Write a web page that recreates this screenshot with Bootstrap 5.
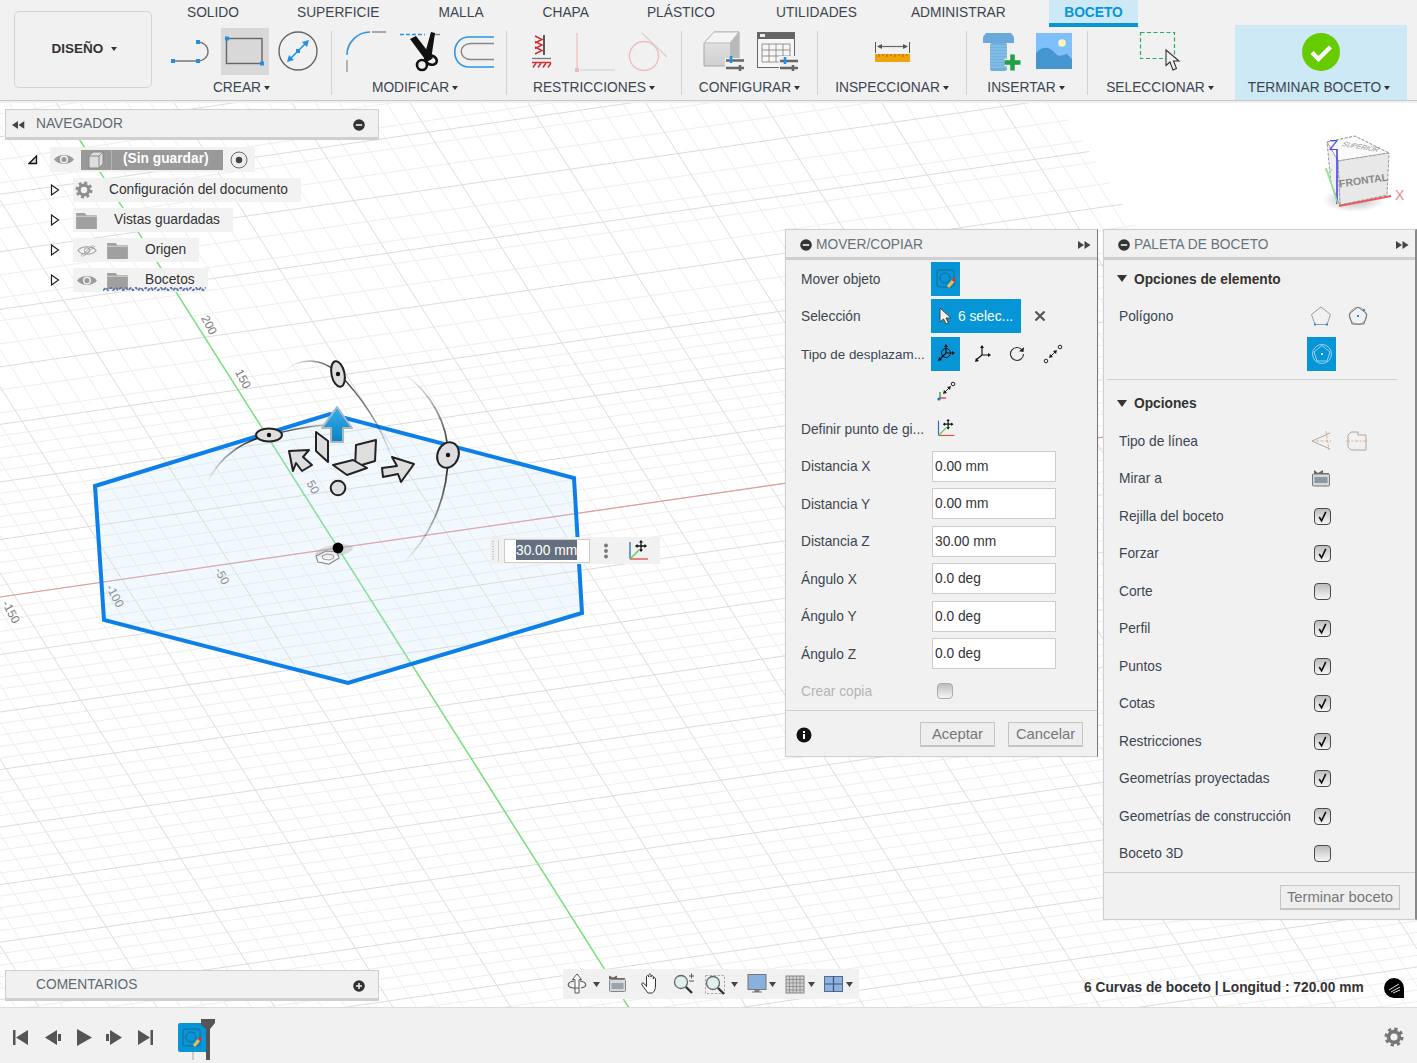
<!DOCTYPE html>
<html lang="es">
<head>
<meta charset="utf-8">
<title>Boceto</title>
<link rel="stylesheet" href="https://cdn.jsdelivr.net/npm/bootstrap@5.3.0/dist/css/bootstrap.min.css">
<style>
html,body{height:100%}
body{font-family:"Liberation Sans",Arial,sans-serif;font-size:13.75px;color:#3c4650;background:#fff;width:1417px;height:1063px}
svg{display:block}
.ribbon{height:103px;background:#f1f1f1;flex:none}
.ribbon-in{height:100px;border-bottom:1px solid #c8c8c8;box-sizing:content-box}
.mode-wrap{width:152px;padding:11px 0 0 14px;flex:none}
.mode-box{width:138px;height:77px;background:#f1f1f1;border:1px solid #d5d5d5;border-radius:5px;font-weight:700;color:#333;font-size:13.5px;padding:0 0 1px 3px}
.mode-box.dropdown-toggle::after{margin-left:8px;color:#333;border-top-width:4px;border-left-width:3.5px;border-right-width:3.5px}
.tabs{height:25px;padding-left:6px;flex-wrap:nowrap}
.tabs .nav-link{padding:5px 29px 0;color:#3c4650;font-size:13.75px;line-height:16px;height:27px}
.tabs .nav-link.active{width:89px;padding:5px 0 0;text-align:center;background:#cce9f5;color:#0696d7;font-weight:700;border-bottom:4px solid #0696d7;border-radius:0;box-sizing:border-box}
.tabs .tab-m{margin-left:1px}
.tabs .tab-u{margin-left:3px}
.tabs .tab-a{margin-left:-4px}
.tabs .tab-b{margin-left:auto;margin-right:279px}
.grp{height:75px;flex:none;padding-top:2px}
.grp svg{height:48px}
.grp .lab{height:25px;line-height:25px;font-size:13.75px;color:#3c4650;white-space:nowrap}
.lab.dropdown-toggle::after{margin-left:3px;vertical-align:2px;border-top-width:4px;border-left-width:3.5px;border-right-width:3.5px;color:#333}
.sep{width:1px;background:#d2d2d2;height:64px;margin-top:6px;flex:none}
.g1{width:179px}.g2{width:174px;padding-right:8px}.g3{width:174px}.g4{width:135px}.g5{width:148px}.g6{width:120px}.g7{width:147px}.g8{width:172px;background:#cce9f5}
.g6 .lab{margin-right:2px}.g7 .lab{margin-right:3px}.g8 .lab{margin-right:4px}
.viewport{flex:1 1 auto;min-height:0;background:#fff;overflow:hidden}
.scene{left:0;top:0}
.bar{background:#f1f1f1;border:1px solid #cfcfcf;border-bottom-width:3px;color:#5f6a72;font-size:13.75px;padding:2px 13px 0 5px;left:5px;width:374px;height:31px}
.bar-nav{top:6px}
.bar-com{top:867px;padding-left:30px}
.tree{left:28px;top:44px}
.tr{height:30px}
.root-tr{height:25px;margin-bottom:3px}
.tw{width:10px;flex:none;margin-right:13px;margin-left:22px}
.tb{background:rgba(241,241,241,.92);height:24px;color:#333;padding-right:13px}
.rootrow{height:25px;padding:0}
.rootlab{background:#999;height:20px;color:#fff;font-weight:700;width:142px;flex:none}
.rootlab .cb{width:31px;height:20px;border-right:1px solid #b4b4b4;flex:none}
.wavy{position:relative}
.wave{position:absolute;left:30px;bottom:1px}
.win{background:#f1f1f1;border:1px solid #cfcfcf;box-shadow:0 0 1px rgba(0,0,0,.15)}
.w-move{left:785px;top:126px;width:313px;height:528px;border-right-color:#777}
.w-pal{left:1103px;top:126px;width:314px;height:691px;border-right:2px solid #888}
.wh{height:30px;background:#f1f1f1;border-bottom:3px solid #cfcfcf;color:#68737b;padding:3px 6px 0 14px;flex:none}
.row-p{height:37.5px;padding-left:15px;color:#3c4650;white-space:nowrap;flex:none}
.lb{width:130px;flex:none;padding-top:3px}
.lb.clip{font-size:13.4px}
.plb{width:187px;flex:none;padding-top:3px}
.sect span{padding-top:3px}
.blue{background:#0696d7;flex:none}
.bi{width:29px;height:34px}
.fi.form-control{width:124px;height:31px;min-height:0;border:1px solid #ccc;border-radius:0;padding:0 2px;font-size:13.75px;color:#333;margin-left:1px;box-shadow:none}
.dis{color:#b4b4b4}
.cb-i.form-check-input{width:17px;height:17px;margin:1px 0 0 8px;border:1.5px solid #4a4a4a;border-radius:4px;background:linear-gradient(#bdbdbd,#f6f6f6);float:none}
.cb-i.form-check-input:checked{background:url("data:image/svg+xml,%3Csvg xmlns='http://www.w3.org/2000/svg' viewBox='0 0 16 16'%3E%3Cpath d='M4.500 8.500l2.500 4 4.500-9.500' fill='none' stroke='%23111' stroke-width='1.700'/%3E%3C/svg%3E") center/100% no-repeat,linear-gradient(#bdbdbd,#f6f6f6);border-color:#4a4a4a}
.cb-i.dim.form-check-input{width:16px;height:16px;border:1px solid #aaa;margin:0 0 0 6px}
.wfoot{border-top:1px solid #cfcfcf;flex:1 1 auto}
.bt.btn{background:#eee;border:1px solid #c4c4c4;border-width:1px 1px 2px 1px;border-radius:0;color:#777;font-size:14.800px;line-height:20px;padding:1px 0;text-align:center;height:25px;margin-top:2px}
.sect{font-weight:700;color:#333}
.hr{height:12px;padding:6px 18px 0 3px;flex:none}
.hr div{border-top:1px solid #cfcfcf}
.dim-box{left:490px;top:434px;width:170px;height:27px;background:#f1f1f1;padding-top:1px}
.dim-in{width:86px;height:24px;background:#fff;border:1px solid #ccc;padding-left:11px;font-size:13.75px;line-height:21px;color:#fff;flex:none;margin-left:5px;white-space:nowrap}
.dim-in span{background:#64707f;display:inline-block;height:20px}
.nav-tools{left:563px;top:866px;width:296px;height:30px;background:#f1f1f1}
.status{left:1084px;top:876px;font-weight:700;color:#333;line-height:18px;white-space:nowrap}
.bottom{height:56px;background:#f1f1f1;border-top:1px solid #dcdcdc;flex:none;padding:0 13px 0 10px}
.ctrl{margin-top:5px}
.gear-b{margin-top:3px;color:#777}
.sym{position:absolute;width:0;height:0}
</style>
</head>
<body class="d-flex flex-column overflow-hidden">
<svg class="sym">
<defs>
<symbol id="gear" viewBox="0 0 20 20"><circle cx="10" cy="10" r="5.400" fill="none" stroke="currentColor" stroke-width="3.600"/><circle cx="10" cy="10" r="8" fill="none" stroke="currentColor" stroke-width="3" stroke-dasharray="3.300 2.980"/></symbol>
<symbol id="eye" viewBox="0 0 22 14"><path d="M0 7C5 .5 17 .5 22 7C17 13.500 5 13.500 0 7Z" fill="#9a9a9a"/><circle cx="11" cy="7" r="4.500" fill="#f1f1f1"/><circle cx="11" cy="7" r="2.800" fill="#9a9a9a"/></symbol>
<symbol id="folder" viewBox="0 0 22 18"><path d="M0 1h9l2 2.500h11V18H0Z" fill="#a0a0a0"/><path d="M0 4.500h22" stroke="#d8d8d8"/></symbol>
<symbol id="minus" viewBox="0 0 12 12"><circle cx="6" cy="6" r="5.800" fill="#333"/><rect x="2.800" y="5.200" width="6.400" height="1.600" fill="#f1f1f1"/></symbol>
<symbol id="ffw" viewBox="0 0 13 8"><path d="M0 0l6 4-6 4ZM6.500 0l6 4-6 4Z" fill="#444"/></symbol>
</defs>
</svg>

<header class="ribbon">
<div class="ribbon-in d-flex">
  <div class="mode-wrap"><button type="button" class="btn mode-box dropdown-toggle d-flex align-items-center justify-content-center">DISEÑO</button></div>
  <div class="flex-grow-1">
    <ul class="nav tabs">
      <li class="nav-item"><a class="nav-link" href="#">SOLIDO</a></li>
      <li class="nav-item"><a class="nav-link" href="#">SUPERFICIE</a></li>
      <li class="nav-item tab-m"><a class="nav-link" href="#">MALLA</a></li>
      <li class="nav-item tab-m"><a class="nav-link" href="#">CHAPA</a></li>
      <li class="nav-item"><a class="nav-link" href="#">PLÁSTICO</a></li>
      <li class="nav-item tab-u"><a class="nav-link" href="#">UTILIDADES</a></li>
      <li class="nav-item tab-a"><a class="nav-link" href="#">ADMINISTRAR</a></li>
      <li class="nav-item tab-b"><a class="nav-link active" href="#">BOCETO</a></li>
    </ul>
    <div class="d-flex">
      <div class="grp g1 text-center">
        <svg width="179" viewBox="152 27 179 48">
          <path d="M175 61H198A10 9.500 0 0 0 198 42" fill="none" stroke="#777" stroke-width="1.400"/>
          <rect x="171" y="59" width="4" height="4" fill="#1e90e8"/><rect x="196" y="59" width="4" height="4" fill="#1e90e8"/><rect x="196" y="40" width="4" height="4" fill="#1e90e8"/>
          <rect x="221" y="28" width="48" height="47" fill="#d8d8d8"/>
          <rect x="226.500" y="38.500" width="35.500" height="25" fill="none" stroke="#666" stroke-width="1.400"/>
          <rect x="225" y="36.500" width="4" height="4" fill="#1e90e8"/><rect x="260" y="61.500" width="4" height="4" fill="#1e90e8"/>
          <circle cx="298" cy="51" r="19" fill="none" stroke="#666" stroke-width="1.400"/>
          <path d="M289 60L307 42" stroke="#1e90e8" stroke-width="1.600"/>
          <path d="M287 62l2-7 5 5ZM309 40l-2 7-5-5Z" fill="#1e90e8"/>
          <rect x="296" y="49" width="4" height="4" fill="#1e90e8"/>
        </svg>
        <span class="lab dropdown-toggle d-inline-block">CREAR</span>
      </div>
      <div class="sep"></div>
      <div class="grp g2 text-center">
        <svg width="166" viewBox="332 27 166 48">
          <path d="M347 60V72" stroke="#999" stroke-width="1.400"/>
          <path d="M347 55C347 42 358 32 370 32" fill="none" stroke="#2b95e8" stroke-width="1.600"/>
          <path d="M372 32H386" stroke="#888" stroke-width="1.400"/>
          <path d="M400 34.500H425" stroke="#2b95e8" stroke-width="1.400" stroke-dasharray="4 2"/>
          <path d="M430 34.500H440" stroke="#888" stroke-width="1.400"/>
          <path d="M410 39L416 36L433 58L427 62Z" fill="#111"/>
          <path d="M431 32L435 33L431 60L424 57Z" fill="#111"/>
          <circle cx="422" cy="65" r="5" fill="none" stroke="#111" stroke-width="2.600"/>
          <ellipse cx="431" cy="60" rx="6" ry="4.500" fill="none" stroke="#111" stroke-width="2.600" transform="rotate(20 431 60)"/>
          <path d="M494 37H469C450 37 450 67 469 67H494" fill="none" stroke="#2b95e8" stroke-width="1.600"/>
          <path d="M494 43.500H471C458 43.500 458 59.500 471 59.500H494" fill="none" stroke="#888" stroke-width="1.400"/>
        </svg>
        <span class="lab dropdown-toggle d-inline-block">MODIFICAR</span>
      </div>
      <div class="sep"></div>
      <div class="grp g3 text-center">
        <svg width="174" viewBox="507 27 174 48">
          <path d="M535 36l7 3.500-7 3.500M535 41.500l7 3.500-7 3.500M535 47l7 3.500-7 3.500" fill="none" stroke="#cf2f36" stroke-width="1.500"/>
          <path d="M544 35V55" stroke="#333" stroke-width="1.600"/>
          <path d="M532 58.500H551" stroke="#777" stroke-width="1.300"/>
          <path d="M532 62.500H551" stroke="#cf2f36" stroke-width="1.500"/>
          <path d="M536 63l-3 4.500M541 63l-3 4.500M546 63l-3 4.500M551 63l-3 4.500" stroke="#cf2f36" stroke-width="1.500"/>
          <path d="M577 33V68" stroke="#f0c4c6" stroke-width="1.400"/>
          <rect x="575" y="68" width="4" height="4" fill="#f0b8bb"/>
          <path d="M580 70H615" stroke="#d8d8d8" stroke-width="1.400"/>
          <circle cx="644" cy="56" r="14.500" fill="none" stroke="#f0bdbf" stroke-width="1.400"/>
          <path d="M642 33L667 57" stroke="#d4d4d4" stroke-width="1.400"/>
        </svg>
        <span class="lab dropdown-toggle d-inline-block">RESTRICCIONES</span>
      </div>
      <div class="sep"></div>
      <div class="grp g4 text-center">
        <svg width="135" viewBox="682 27 135 48">
          <defs><linearGradient id="cf" x1="0" y1="0" x2="0" y2="1"><stop offset="0" stop-color="#e8e8e8"/><stop offset="1" stop-color="#cfcfcf"/></linearGradient></defs>
          <path d="M704 43L714 32H739V66H704Z" fill="url(#cf)" stroke="#a8a8a8"/>
          <path d="M714 32H739L730 43H704Z" fill="#f4f4f4" stroke="#bbb"/>
          <path d="M730 43L739 32V66H730Z" fill="#b9b9b9"/>
          <rect x="725" y="58" width="19" height="9" fill="#f1f1f1"/>
          <path d="M726 60.500H744M726 68H744" stroke="#666" stroke-width="2.400"/>
          <path d="M731 56V63" stroke="#1e90e8" stroke-width="2.600"/><path d="M740 65V71" stroke="#666" stroke-width="2.600"/>
          <rect x="757.500" y="32.500" width="37" height="35" fill="#f7f7f7" stroke="#666"/>
          <rect x="757" y="32" width="38" height="7" fill="#666"/><rect x="760" y="34" width="5" height="3" fill="#eee"/>
          <path d="M762 44H790V62H762ZM762 50H790M762 56H790M769 44V62M776 44V62M783 44V62" fill="none" stroke="#888" stroke-width=".9"/>
          <rect x="779" y="56" width="19" height="15" fill="#f1f1f1"/>
          <path d="M780 61H798M780 68H798" stroke="#666" stroke-width="2.400"/>
          <path d="M785 57V64" stroke="#1e90e8" stroke-width="2.600"/><path d="M793 65V71" stroke="#666" stroke-width="2.600"/>
        </svg>
        <span class="lab dropdown-toggle d-inline-block">CONFIGURAR</span>
      </div>
      <div class="sep"></div>
      <div class="grp g5 text-center">
        <svg width="148" viewBox="818 27 148 48">
          <path d="M875.500 42V53M909.500 42V53" stroke="#555"/>
          <path d="M878 46.500H907" stroke="#666" stroke-width="1.200"/>
          <path d="M877 46.500l5-2.500v5ZM908 46.500l-5-2.500v5Z" fill="#555"/>
          <rect x="875" y="54" width="35" height="8" fill="#f0a30a"/>
          <path d="M879 54v3M883 54v2M887 54v3M891 54v2M895 54v3M899 54v2M903 54v3M907 54v2" stroke="#8a6206" stroke-width=".8"/>
        </svg>
        <span class="lab dropdown-toggle d-inline-block">INSPECCIONAR</span>
      </div>
      <div class="sep"></div>
      <div class="grp g6 text-center">
        <svg width="120" viewBox="967 27 120 48">
          <path d="M983 37l3-4h25l3 4v6h-31Z" fill="#6aa9dc"/>
          <rect x="990" y="43" width="17" height="28" rx="2" fill="#6fb1de"/>
          <path d="M990 46h17M990 49h17M990 52h17M990 55h17M990 58h17M990 61h17M990 64h17M990 67h17" stroke="#97c6e8" stroke-width="1"/>
          <path d="M1012.500 54.500v16M1004.500 62.500h16" stroke="#f1f1f1" stroke-width="7.500"/>
          <path d="M1012.500 54.500v16M1004.500 62.500h16" stroke="#21a04a" stroke-width="4.500"/>
          <rect x="1036" y="33" width="36" height="36" fill="#7fc0fb"/>
          <path d="M1036 69V53C1042 46 1049 46 1055 53C1059 58 1063 55 1067 54L1072 59V69Z" fill="#4596cf"/>
          <circle cx="1062" cy="43" r="3.800" fill="#fff3b8"/>
        </svg>
        <span class="lab dropdown-toggle d-inline-block">INSERTAR</span>
      </div>
      <div class="sep"></div>
      <div class="grp g7 text-center">
        <svg width="147" viewBox="1088 27 147 48">
          <rect x="1140.500" y="32.500" width="34" height="26" fill="none" stroke="#27ae60" stroke-width="1.200" stroke-dasharray="4 2.500"/>
          <path d="M1166 50V65.500L1170 62L1173 70L1176.500 68.500L1173.500 61H1179Z" fill="#f1f1f1" stroke="#333" stroke-width="1.100"/>
        </svg>
        <span class="lab dropdown-toggle d-inline-block">SELECCIONAR</span>
      </div>
      <div class="grp g8 text-center">
        <svg width="172" viewBox="1235 27 172 48">
          <circle cx="1321" cy="52" r="19" fill="#66cc00"/>
          <path d="M1312 52.500l6.500 6.500 12-12" fill="none" stroke="#fff" stroke-width="4.400"/>
        </svg>
        <span class="lab dropdown-toggle d-inline-block">TERMINAR BOCETO</span>
      </div>
    </div>
  </div>
</div>
</header>

<main class="viewport position-relative">
  <svg class="scene position-absolute" width="1417" height="904" viewBox="0 103 1417 904">
    <defs>
      <linearGradient id="a1" gradientUnits="userSpaceOnUse" x1="282" y1="373" x2="392" y2="458"><stop offset="0" stop-color="#222" stop-opacity="0"/><stop offset=".3" stop-color="#222"/><stop offset="1" stop-color="#222" stop-opacity=".05"/></linearGradient>
      <linearGradient id="a2" gradientUnits="userSpaceOnUse" x1="420" y1="373" x2="420" y2="563"><stop offset="0" stop-color="#222" stop-opacity="0"/><stop offset=".45" stop-color="#111"/><stop offset="1" stop-color="#222" stop-opacity="0"/></linearGradient>
      <linearGradient id="a3" gradientUnits="userSpaceOnUse" x1="207" y1="483" x2="330" y2="425"><stop offset="0" stop-color="#222" stop-opacity="0"/><stop offset=".5" stop-color="#111"/><stop offset="1" stop-color="#222" stop-opacity=".3"/></linearGradient>
      <linearGradient id="up" x1="0" y1="0" x2="0" y2="1"><stop offset="0" stop-color="#36b1ec"/><stop offset="1" stop-color="#0a80c0"/></linearGradient>
      <radialGradient id="shadow"><stop offset="0" stop-color="#000" stop-opacity=".28"/><stop offset="1" stop-color="#000" stop-opacity="0"/></radialGradient>
    </defs>
    <path id="minor" fill="none" stroke="#eeeeee" stroke-width="1"/>
    <path id="major" fill="none" stroke="#dcdcdc" stroke-width="1"/>
    <path id="ax" fill="none" stroke="#e49a9a" stroke-width="1.200"/>
    <path id="ay" fill="none" stroke="#79e07c" stroke-width="1.500"/>
    <g fill="#7c7c7c" font-size="12" font-family="Liberation Sans,Arial,sans-serif" text-anchor="middle">
      <text transform="translate(209 325) rotate(62)" dy="4">200</text>
      <text transform="translate(243 379) rotate(62)" dy="4">150</text>
      <text transform="translate(313 487) rotate(62)" dy="4">50</text>
      <text transform="translate(222 576) rotate(62)" dy="4">-50</text>
      <text transform="translate(115 596) rotate(62)" dy="4">-100</text>
      <text transform="translate(11 612) rotate(62)" dy="4">-150</text>
    </g>
    <path d="M95 486L330 414L574 478L582 613L348 683L104 620Z" fill="#bfe0fb" fill-opacity=".22" stroke="#0d7fe8" stroke-width="4" stroke-linejoin="miter"/>
    <ellipse cx="334" cy="551" rx="19" ry="6" fill="#999" opacity=".3" transform="rotate(-10 334 551)"/>
    <path d="M316 556l10-5 11 1 2 6-10 6-11-2Z" fill="#fff" fill-opacity=".5" stroke="#8c8c8c" stroke-width="1.200"/>
    <path d="M322 556l5-2 6 1 1 3-5 2-6-1Z" fill="none" stroke="#9a9a9a"/>
    <circle cx="338" cy="548" r="5.400" fill="#000"/>
    <path d="M282 373C300 356 322 358 338 373C360 395 380 425 392 458" fill="none" stroke="url(#a1)" stroke-width="1.500"/>
    <path d="M403 373C432 393 448 425 448 455C448 500 428 540 403 563" fill="none" stroke="url(#a2)" stroke-width="1.700"/>
    <path d="M207 483C220 455 245 440 270 435C290 430 310 426 326 425" fill="none" stroke="url(#a3)" stroke-width="1.500"/>
    <g fill="#dedede" stroke="#222" stroke-width="2">
      <ellipse cx="338" cy="374" rx="6.500" ry="13" transform="rotate(-12 338 374)"/>
      <ellipse cx="269" cy="435" rx="13" ry="6.500"/>
      <ellipse cx="448" cy="455" rx="10.500" ry="13" transform="rotate(22 448 455)"/>
    </g>
    <circle cx="338" cy="374" r="2.200" fill="#111"/><circle cx="269" cy="435" r="2.200" fill="#111"/><circle cx="448" cy="455" r="2.200" fill="#111"/>
    <path d="M337 407L322 428H331V442H343V428H352Z" fill="url(#up)" stroke="#aab8c2" stroke-width="2" stroke-linejoin="round"/>
    <g fill="#dedede" stroke="#222" stroke-width="2" stroke-linejoin="round">
      <path d="M289 451L309 450L303 457L312 465L302 471L296 463L293 471Z"/>
      <path d="M414 464L392 457L397 466L382 468L383 477L398 474L401 482Z"/>
      <path d="M316 432L328 441V462L316 451Z"/>
      <path d="M356 445L376 440L375 461L355 467Z"/>
      <path d="M333 465L353 460L367 468L347 475Z"/>
    </g>
    <circle cx="338" cy="488" r="7.300" fill="#dedede" stroke="#222" stroke-width="2"/>
    <ellipse cx="1354" cy="200" rx="32" ry="12" fill="url(#shadow)"/>
    <g font-family="Liberation Sans,Arial,sans-serif">
      <path d="M1327 142L1355 136L1389 153L1387 195L1340 205L1338 161Z" fill="#f4f4f4" fill-opacity=".9"/>
      <path d="M1327 142L1355 136L1389 153L1338 161Z" fill="#fafafa" stroke="#8a8a8a" stroke-dasharray="3 1.500"/>
      <path d="M1338 161L1389 153L1387 195L1340 205Z" fill="#e8e8e8" stroke="#9a9a9a" stroke-dasharray="3 1.500"/>
      <path d="M1327 142L1338 161L1340 205L1331 183Z" fill="#efefef" stroke="#9a9a9a" stroke-dasharray="3 1.500"/>
      <text transform="translate(1364 184) rotate(-8)" text-anchor="middle" font-size="10.500" font-weight="700" fill="#8a8a8a">FRONTAL</text>
      <text transform="translate(1359 149) rotate(10) skewX(-30)" text-anchor="middle" font-size="7" fill="#9a9a9a">SUPERIOR</text>
      <path d="M1337 150V204" stroke="#3a3ae0" stroke-width="1.500"/>
      <path d="M1339 206L1391 196" stroke="#e85a5a" stroke-width="2"/>
      <path d="M1338 204L1326 168" stroke="#8fe08f" stroke-width="1.500"/>
      <text x="1329" y="150" font-size="15" fill="#4a4af0">Z</text>
      <text x="1324" y="178" font-size="13" fill="#9be69b">Y</text>
      <text x="1395" y="200" font-size="14" fill="#f08a8a">X</text>
    </g>
  </svg>

  <div class="bar bar-nav position-absolute d-flex align-items-center">
    <svg width="14" height="8" viewBox="0 0 13 8"><use href="#ffw" transform="translate(13 0) scale(-1 1)"/></svg>
    <span class="flex-grow-1" style="margin-left:11px">NAVEGADOR</span>
    <svg width="12" height="12"><use href="#minus"/></svg>
  </div>

  <div class="tree position-absolute">
    <div class="root-tr d-flex align-items-center">
      <svg width="10" height="10" viewBox="0 0 10 10" style="margin-right:12px"><path d="M1 8.500L8.500 1V8.500Z" fill="#d8d8d8" stroke="#111" stroke-width="1.300"/></svg>
      <div class="tb rootrow d-flex align-items-center">
        <div style="width:31px;padding-left:4px"><svg width="20" height="13"><use href="#eye"/></svg></div>
        <div class="rootlab d-flex align-items-center">
          <div class="cb d-flex align-items-center justify-content-center"><svg width="18" height="18" viewBox="0 0 18 18"><path d="M2 5l4-4h10v12l-4 4H2Z" fill="#ddd" stroke="#888"/><path d="M2 5h10v12M12 5l4-4" fill="none" stroke="#888"/></svg></div>
          <span style="margin-left:11px">(Sin guardar)</span>
        </div>
        <div class="d-flex align-items-center justify-content-center" style="width:32px"><svg width="18" height="18" viewBox="0 0 18 18"><circle cx="9" cy="9" r="8" fill="#eee" stroke="#666"/><circle cx="9" cy="9" r="3.200" fill="#444"/></svg></div>
      </div>
    </div>
    <div class="tr d-flex align-items-center">
      <svg width="10" height="12" viewBox="0 0 9 12" class="tw"><path d="M1 1L8 6L1 11Z" fill="#fff" stroke="#222" stroke-width="1.200"/></svg>
      <div class="tb d-flex align-items-center"><svg width="18" height="18" style="margin-left:2px;color:#8e8e8e"><use href="#gear"/></svg><span style="margin-left:16px">Configuración del documento</span></div>
    </div>
    <div class="tr d-flex align-items-center">
      <svg width="10" height="12" viewBox="0 0 9 12" class="tw"><path d="M1 1L8 6L1 11Z" fill="#fff" stroke="#222" stroke-width="1.200"/></svg>
      <div class="tb d-flex align-items-center"><svg width="21" height="17" style="margin-left:3px"><use href="#folder"/></svg><span style="margin-left:17px">Vistas guardadas</span></div>
    </div>
    <div class="tr d-flex align-items-center">
      <svg width="10" height="12" viewBox="0 0 9 12" class="tw"><path d="M1 1L8 6L1 11Z" fill="#fff" stroke="#222" stroke-width="1.200"/></svg>
      <div class="tb d-flex align-items-center"><svg width="20" height="13" viewBox="0 0 22 14" style="margin-left:4px"><path d="M1 7C5 1.500 17 1.500 21 7C17 12.500 5 12.500 1 7Z" fill="none" stroke="#a0a0a0" stroke-width="1.300"/><circle cx="11" cy="7" r="3" fill="none" stroke="#a0a0a0"/><path d="M4 13L18 1M6 14L20 2" stroke="#a0a0a0"/></svg><svg width="21" height="17" style="margin-left:10px"><use href="#folder"/></svg><span style="margin-left:17px">Origen</span></div>
    </div>
    <div class="tr d-flex align-items-center">
      <svg width="10" height="12" viewBox="0 0 9 12" class="tw"><path d="M1 1L8 6L1 11Z" fill="#fff" stroke="#222" stroke-width="1.200"/></svg>
      <div class="tb wavy d-flex align-items-center"><svg width="20" height="13" style="margin-left:4px"><use href="#eye"/></svg><svg width="21" height="17" style="margin-left:10px"><use href="#folder"/></svg><span style="margin-left:17px">Bocetos</span>
        <svg class="wave" width="103" height="4" viewBox="0 0 103 4"><path d="M0 3.500L3 .5L5 3.500L8 .5L10 3.500L13 .5L15 3.500L18 .5L20 3.500L23 .5L25 3.500L28 .5L30 3.500L33 .5L35 3.500L38 .5L40 3.500L43 .5L45 3.500L48 .5L50 3.500L53 .5L55 3.500L58 .5L60 3.500L63 .5L65 3.500L68 .5L70 3.500L73 .5L75 3.500L78 .5L80 3.500L83 .5L85 3.500L88 .5L90 3.500L93 .5L95 3.500L98 .5L100 3.500L103 .5" fill="none" stroke="#5f76a6" stroke-width="1.800" stroke-dasharray="3.500 1.500"/></svg>
      </div>
    </div>
  </div>

  <div class="dim-box position-absolute d-flex align-items-center">
    <svg width="9" height="22" viewBox="0 0 9 22"><path d="M3 1v20" stroke="#c4c4c4" stroke-width="2" stroke-dasharray="1 1.500"/><path d="M8.500 0v22" stroke="#cfcfcf"/></svg>
    <div class="dim-in"><span>30.00 mm</span></div>
    <svg width="8" height="16" viewBox="0 0 8 16" style="margin-left:12px"><circle cx="4" cy="2.500" r="1.900" fill="#777"/><circle cx="4" cy="8" r="1.900" fill="#777"/><circle cx="4" cy="13.500" r="1.900" fill="#777"/></svg>
    <svg width="24" height="24" viewBox="0 0 24 24" style="margin-left:16px"><path d="M4 3V20" stroke="#1f70c8" stroke-width="1.300"/><path d="M4 20H22" stroke="#e04848" stroke-width="1.300"/><path d="M4 20L13 11" stroke="#62c95a" stroke-width="1.500"/><path d="M15 2V12M10 7H20" stroke="#111" stroke-width="1.300"/><path d="M15 1l-2 2.500h4ZM15 13l-2-2.500h4ZM9 7l2.500-2v4ZM21 7l-2.500-2v4Z" fill="#111"/></svg>
  </div>

  <section class="win w-move position-absolute d-flex flex-column">
    <div class="wh d-flex align-items-center">
      <svg width="12" height="12" class="me-1"><use href="#minus"/></svg><span class="flex-grow-1">MOVER/COPIAR</span>
      <svg width="13" height="8"><use href="#ffw"/></svg>
    </div>
    <div class="row-p d-flex align-items-center">
      <div class="lb">Mover objeto</div>
      <div class="blue bi d-flex align-items-center justify-content-center">
        <svg width="24" height="24" viewBox="0 0 24 24"><rect x="3" y="3" width="17" height="17" rx="2" fill="none" stroke="#1d6690"/><circle cx="11" cy="11" r="5" fill="none" stroke="#1d6690"/><path d="M14 20L19 14" stroke="#f0c040" stroke-width="3"/><circle cx="20" cy="12.500" r="1.800" fill="#e5312c"/></svg>
      </div>
    </div>
    <div class="row-p d-flex align-items-center">
      <div class="lb">Selección</div>
      <button type="button" class="btn blue d-flex align-items-center text-white rounded-0 border-0 p-0 ps-2" style="width:90px;height:34px;font-size:13.75px">
        <svg width="13" height="18" viewBox="0 0 13 18" class="me-1"><path d="M1 1V15L4.500 12L7 17L9.500 16L7 11H12Z" fill="#f1f1f1" stroke="#444"/></svg><span style="margin-left:2px;padding-top:2px">6 selec...</span>
      </button>
      <svg width="12" height="12" viewBox="0 0 12 12" style="margin-left:13px"><path d="M1.500 1.500L10.500 10.500M10.500 1.500L1.500 10.500" stroke="#555" stroke-width="2.200"/></svg>
    </div>
    <div class="row-p d-flex align-items-center">
      <div class="lb clip">Tipo de desplazam...</div>
      <div class="blue bi d-flex align-items-center justify-content-center">
        <svg width="20" height="20" viewBox="0 0 20 20"><circle cx="10" cy="9" r="4.500" fill="none" stroke="#111"/><path d="M10 1V9M10 9L3 16M10 9H18" stroke="#111" stroke-width="1.200"/><path d="M10 0l-2 3h4ZM2 17l1-4 3 3ZM19 9l-3-2v4Z" fill="#111"/></svg>
      </div>
      <svg width="18" height="18" viewBox="0 0 18 18" style="margin-left:13px"><path d="M9 2V10M9 10L3 15M9 10H16" stroke="#111" stroke-width="1.200"/><path d="M9 0l-2 3h4ZM2 17l1-4 3 3ZM18 10l-3-2v4Z" fill="#111"/></svg>
      <svg width="16" height="16" viewBox="0 0 16 16" style="margin-left:18px"><path d="M13.500 4.500A6.500 6.500 0 1 0 14.500 8" fill="none" stroke="#333" stroke-width="1.100"/><path d="M15 1l-.5 5-4.500-.8Z" fill="#222"/></svg>
      <svg width="20" height="20" viewBox="0 0 20 20" style="margin-left:18px"><circle cx="3" cy="17" r="1.800" fill="none" stroke="#222"/><circle cx="17" cy="3" r="1.800" fill="none" stroke="#222"/><path d="M7 13L13 7" stroke="#222"/><path d="M6 14l1-4 3 3ZM14 6l-1 4-3-3Z" fill="#222"/></svg>
    </div>
    <div class="row-p d-flex align-items-center">
      <div class="lb"></div>
      <div class="bi d-flex align-items-center justify-content-center">
        <svg width="20" height="20" viewBox="0 0 20 20"><circle cx="17" cy="3" r="1.800" fill="none" stroke="#222"/><path d="M8 12L14 6" stroke="#222"/><path d="M7 13l1-4 3 3ZM15 5l-1 4-3-3Z" fill="#222"/><path d="M4 11V17" stroke="#2c9c3c" stroke-width="1.300"/><path d="M4 17H10" stroke="#d33" stroke-width="1.300"/><circle cx="3" cy="18" r="1.600" fill="#1f70c8"/></svg>
      </div>
    </div>
    <div class="row-p d-flex align-items-center">
      <div class="lb">Definir punto de gi...</div>
      <div class="bi d-flex align-items-center justify-content-center">
        <svg width="21" height="21" viewBox="0 0 24 24"><path d="M4 3V20" stroke="#1f70c8" stroke-width="1.300"/><path d="M4 20H22" stroke="#e04848" stroke-width="1.300"/><path d="M4 20L13 11" stroke="#62c95a" stroke-width="1.500"/><path d="M15 2V12M10 7H20" stroke="#111" stroke-width="1.300"/><path d="M15 1l-2 2.500h4ZM15 13l-2-2.500h4ZM9 7l2.500-2v4ZM21 7l-2.500-2v4Z" fill="#111"/></svg>
      </div>
    </div>
    <div class="row-p d-flex align-items-center"><div class="lb">Distancia X</div><input class="form-control fi" value="0.00 mm"></div>
    <div class="row-p d-flex align-items-center"><div class="lb">Distancia Y</div><input class="form-control fi" value="0.00 mm"></div>
    <div class="row-p d-flex align-items-center"><div class="lb">Distancia Z</div><input class="form-control fi" value="30.00 mm"></div>
    <div class="row-p d-flex align-items-center"><div class="lb">Ángulo X</div><input class="form-control fi" value="0.0 deg"></div>
    <div class="row-p d-flex align-items-center"><div class="lb">Ángulo Y</div><input class="form-control fi" value="0.0 deg"></div>
    <div class="row-p d-flex align-items-center"><div class="lb">Ángulo Z</div><input class="form-control fi" value="0.0 deg"></div>
    <div class="row-p d-flex align-items-center"><div class="lb dis">Crear copia</div><input class="form-check-input cb-i dim" type="checkbox"></div>
    <div class="wfoot d-flex align-items-center" style="padding:0 14px 0 10px">
      <svg width="16" height="16" viewBox="0 0 16 16" style="margin-top:2px"><circle cx="8" cy="8" r="7.500" fill="#111"/><rect x="7" y="7" width="2" height="5" fill="#fff"/><rect x="7" y="4" width="2" height="2" fill="#fff"/></svg>
      <button type="button" class="btn bt ms-auto" style="width:75px">Aceptar</button>
      <button type="button" class="btn bt" style="width:75px;margin-left:13px">Cancelar</button>
    </div>
  </section>

  <section class="win w-pal position-absolute d-flex flex-column">
    <div class="wh d-flex align-items-center">
      <svg width="12" height="12" class="me-1"><use href="#minus"/></svg><span class="flex-grow-1">PALETA DE BOCETO</span>
      <svg width="13" height="8"><use href="#ffw"/></svg>
    </div>
    <div class="row-p d-flex align-items-center sect"><svg width="10" height="7" viewBox="0 0 10 7" style="margin:0 7px 0 -2px"><path d="M0 0H10L5 7Z" fill="#333"/></svg><span>Opciones de elemento</span></div>
    <div class="row-p d-flex align-items-center">
      <div class="plb">Polígono</div>
      <svg width="22" height="22" viewBox="0 0 22 22" style="margin-left:4px"><path d="M11 2L20.500 9.500L17 19.500H5L1.500 9.500Z" fill="none" stroke="#9a9a9a"/><rect x="4" y="18.500" width="2" height="2" fill="#1e90e8"/><rect x="16" y="18.500" width="2" height="2" fill="#1e90e8"/></svg>
      <svg width="22" height="22" viewBox="0 0 22 22" style="margin-left:15px"><circle cx="11" cy="11" r="8.500" fill="none" stroke="#9a9a9a"/><path d="M11 2L20 9L17 19H5L2 9Z" fill="none" stroke="#777"/><rect x="10" y="10" width="2" height="2" fill="#1e90e8"/><rect x="16" y="4" width="2" height="2" fill="#1e90e8"/></svg>
    </div>
    <div class="row-p d-flex align-items-center">
      <div class="plb" style="width:188px"></div>
      <div class="blue bi d-flex align-items-center justify-content-center"><svg width="22" height="22" viewBox="0 0 22 22"><circle cx="11" cy="11" r="9.500" fill="none" stroke="#9ad2ee"/><path d="M11 2.500L19 9L16 18H6L3 9Z" fill="none" stroke="#9ad2ee"/><rect x="10" y="10" width="2" height="2" fill="#d7eef9"/></svg></div>
    </div>
    <div class="hr"><div></div></div>
    <div class="row-p d-flex align-items-center sect"><svg width="10" height="7" viewBox="0 0 10 7" style="margin:0 7px 0 -2px"><path d="M0 0H10L5 7Z" fill="#333"/></svg><span>Opciones</span></div>
    <div class="row-p d-flex align-items-center">
      <div class="plb">Tipo de línea</div>
      <svg width="22" height="22" viewBox="0 0 22 22" style="margin-left:4px"><path d="M20 3L2 11L20 19" fill="none" stroke="#a8a8a8"/><path d="M16 1L19 20M6 11H21" fill="none" stroke="#ecae80" stroke-dasharray="3 1.500"/></svg>
      <svg width="22" height="22" viewBox="0 0 22 22" style="margin-left:14px"><path d="M5 2H12V5H20V20H5L2 17V5Z" fill="none" stroke="#a8a8a8"/><path d="M0 11H22" stroke="#ecae80" stroke-dasharray="4 1.500 1.500 1.500"/></svg>
    </div>
    <div class="row-p d-flex align-items-center">
      <div class="plb">Mirar a</div>
      <svg width="20" height="20" viewBox="0 0 20 20" style="margin-left:5px"><path d="M3 6V2L7 5L12 2V5H18V6Z" fill="#666"/><rect x="1.500" y="6" width="17" height="12" rx="1" fill="#d6d6d6" stroke="#777"/><rect x="3.500" y="9" width="13" height="6" fill="#8c98a4"/></svg>
    </div>
    <div class="row-p d-flex align-items-center"><div class="plb">Rejilla del boceto</div><input class="form-check-input cb-i" type="checkbox" checked></div>
    <div class="row-p d-flex align-items-center"><div class="plb">Forzar</div><input class="form-check-input cb-i" type="checkbox" checked></div>
    <div class="row-p d-flex align-items-center"><div class="plb">Corte</div><input class="form-check-input cb-i" type="checkbox"></div>
    <div class="row-p d-flex align-items-center"><div class="plb">Perfil</div><input class="form-check-input cb-i" type="checkbox" checked></div>
    <div class="row-p d-flex align-items-center"><div class="plb">Puntos</div><input class="form-check-input cb-i" type="checkbox" checked></div>
    <div class="row-p d-flex align-items-center"><div class="plb">Cotas</div><input class="form-check-input cb-i" type="checkbox" checked></div>
    <div class="row-p d-flex align-items-center"><div class="plb">Restricciones</div><input class="form-check-input cb-i" type="checkbox" checked></div>
    <div class="row-p d-flex align-items-center"><div class="plb">Geometrías proyectadas</div><input class="form-check-input cb-i" type="checkbox" checked></div>
    <div class="row-p d-flex align-items-center"><div class="plb">Geometrías de construcción</div><input class="form-check-input cb-i" type="checkbox" checked></div>
    <div class="row-p d-flex align-items-center"><div class="plb">Boceto 3D</div><input class="form-check-input cb-i" type="checkbox"></div>
    <div class="wfoot d-flex align-items-center justify-content-end" style="padding:0 15px 0 0">
      <button type="button" class="btn bt" style="width:120px">Terminar boceto</button>
    </div>
  </section>

  <div class="bar bar-com position-absolute d-flex align-items-center">
    <span class="flex-grow-1">COMENTARIOS</span>
    <svg width="12" height="12" viewBox="0 0 12 12"><circle cx="6" cy="6" r="5.800" fill="#333"/><path d="M3 6H9M6 3V9" stroke="#f1f1f1" stroke-width="1.500"/></svg>
  </div>

  <div class="nav-tools position-absolute">
    <svg width="296" height="30" viewBox="563 969 296 30">
      <g fill="#444"><path d="M593 982h7l-3.500 5ZM731 982h7l-3.500 5ZM769 982h7l-3.500 5ZM808 982h7l-3.500 5ZM846 982h7l-3.500 5Z"/></g>
      <path d="M577 974l-4.500 5.500h2.500v13.500h4V979.500H581.500Z" fill="#fff" stroke="#555"/>
      <path d="M574 981c-7 1-8 6-1 7M580 981c7 1 8 6 1 7M572 988h7" fill="none" stroke="#555" stroke-width="1.100"/>
      <path d="M609 979v-3.500l4 2 4-2v2.500h8v1Z" fill="#666"/><rect x="609.500" y="979.500" width="16" height="12" rx="1" fill="#d8d8d8" stroke="#888"/><rect x="611.500" y="983" width="12" height="6" fill="#9aa4ae"/>
      <path d="M648 993l-6-8c-1-2 1-3 2.500-1l2 2.500v-9.500c0-2 2.200-2 2.200 0v-1.500c0-2 2.300-2 2.300 0v1.500c0-2 2.300-2 2.300 0v2c0-2 2.200-2 2.200 0v7c0 4-2 7-4 7h-3Z" fill="#fff" stroke="#333"/>
      <circle cx="681" cy="982" r="6.500" fill="#dff1ee" stroke="#666" stroke-width="1.300"/><path d="M686 987l6 6" stroke="#333" stroke-width="2.400"/><path d="M689 976h5M691.500 973.500v5M689 981h5" stroke="#555"/>
      <rect x="705.500" y="975.500" width="19" height="18" fill="none" stroke="#aaa" stroke-dasharray="2.500 1.500"/><circle cx="713" cy="983" r="6.500" fill="#dff1ee" stroke="#666" stroke-width="1.300"/><path d="M718 988l6 6" stroke="#333" stroke-width="2.400"/>
      <rect x="748" y="974.500" width="18" height="15" fill="#8ab0de" stroke="#777"/><path d="M755 989.500h4v2h-4ZM752 992h10" fill="#888" stroke="#777"/>
      <rect x="786" y="976" width="18" height="17" fill="#d0d0d0" stroke="#888"/><path d="M786 979.500h18M786 983h18M786 986.500h18M786 990h18M789.500 976v17M793 976v17M796.500 976v17M800 976v17" stroke="#888" stroke-width=".8"/>
      <rect x="824.500" y="976.500" width="18" height="15" fill="#8fb3dc" stroke="#4a6a98"/><path d="M833.500 976.500v15M824.500 984h18" stroke="#35557f" stroke-width="1.200"/>
    </svg>
  </div>

  <div class="status position-absolute">6 Curvas de boceto | Longitud : 720.00 mm</div>
  <svg class="position-absolute" style="left:1384px;top:875px" width="21" height="20" viewBox="0 0 21 20"><path d="M10 0A10 10 0 0 0 10 20H20V10A10 10 0 0 0 10 0Z" fill="#000"/><path d="M5 12L15 6M7 14L16 9M9 15L16 12" stroke="#ddd"/></svg>
</main>

<footer class="bottom d-flex align-items-center">
  <svg class="ctrl" width="150" height="24" viewBox="10 1026 150 24">
    <g fill="#555">
      <rect x="13" y="1030" width="2.500" height="15"/><path d="M28 1030V1045L16 1037.500Z"/>
      <path d="M45 1037.500L57 1030V1045Z"/><rect x="58" y="1034" width="3" height="7"/>
      <path d="M77 1029V1046L92 1037.500Z"/>
      <rect x="106" y="1034" width="3" height="7"/><path d="M110 1030V1045L122 1037.500Z"/>
      <path d="M138 1030V1045L150 1037.500Z"/><rect x="150.500" y="1030" width="2.500" height="15"/>
    </g>
  </svg>
  <div class="position-relative" style="margin-left:18px;width:40px;height:56px">
    <div class="position-absolute" style="left:0;top:15px;width:28px;height:29px;background:#0696d7;border-radius:2px 0 0 2px">
      <svg width="28" height="29" viewBox="0 0 28 29"><rect x="5" y="6" width="17" height="17" rx="2" fill="none" stroke="#1d6690"/><circle cx="13" cy="14" r="5" fill="none" stroke="#1d6690"/><path d="M16 23L21 17" stroke="#f0c040" stroke-width="3"/><circle cx="22" cy="16" r="1.800" fill="#e5312c"/></svg>
    </div>
    <div class="position-absolute" style="left:14px;top:44px;width:2px;height:8px;background:#ccc"></div>
    <svg class="position-absolute" style="left:22px;top:11px" width="16" height="41" viewBox="0 0 16 41"><path d="M1 0H15V4L10 10V41H6V10L1 6Z" fill="#555"/></svg>
  </div>
  <svg class="ms-auto gear-b" width="20" height="20"><use href="#gear"/></svg>
</footer>

<script src="https://cdn.jsdelivr.net/npm/bootstrap@5.3.0/dist/js/bootstrap.bundle.min.js"></script>
<script>
(function(){
  var O=[338,548],U=[2.16,-0.313],V=[-0.667,-1.054];
  function P(u,v){return (O[0]+U[0]*u+V[0]*v).toFixed(1)+' '+(O[1]+U[1]*u+V[1]*v).toFixed(1);}
  var uMin=-800,uMax=425,vMin=-800,vMax=800,mi='',ma='';
  for(var u=-800;u<=420;u+=10){var s='M'+P(u,vMin)+'L'+P(u,vMax);if(u%50===0)ma+=s;else mi+=s;}
  for(var v=-800;v<=800;v+=10){
    var t='M'+P(uMin,v)+'L'+P(uMax,v);
    if(v%50===0)ma+=t;
    else if(v<150||v%20===0)mi+=t;
  }
  document.getElementById('minor').setAttribute('d',mi);
  document.getElementById('major').setAttribute('d',ma);
  document.getElementById('ax').setAttribute('d','M'+P(uMin,0)+'L'+P(uMax,0));
  document.getElementById('ay').setAttribute('d','M'+P(0,vMin)+'L'+P(0,390));
})();
</script>
</body>
</html>
